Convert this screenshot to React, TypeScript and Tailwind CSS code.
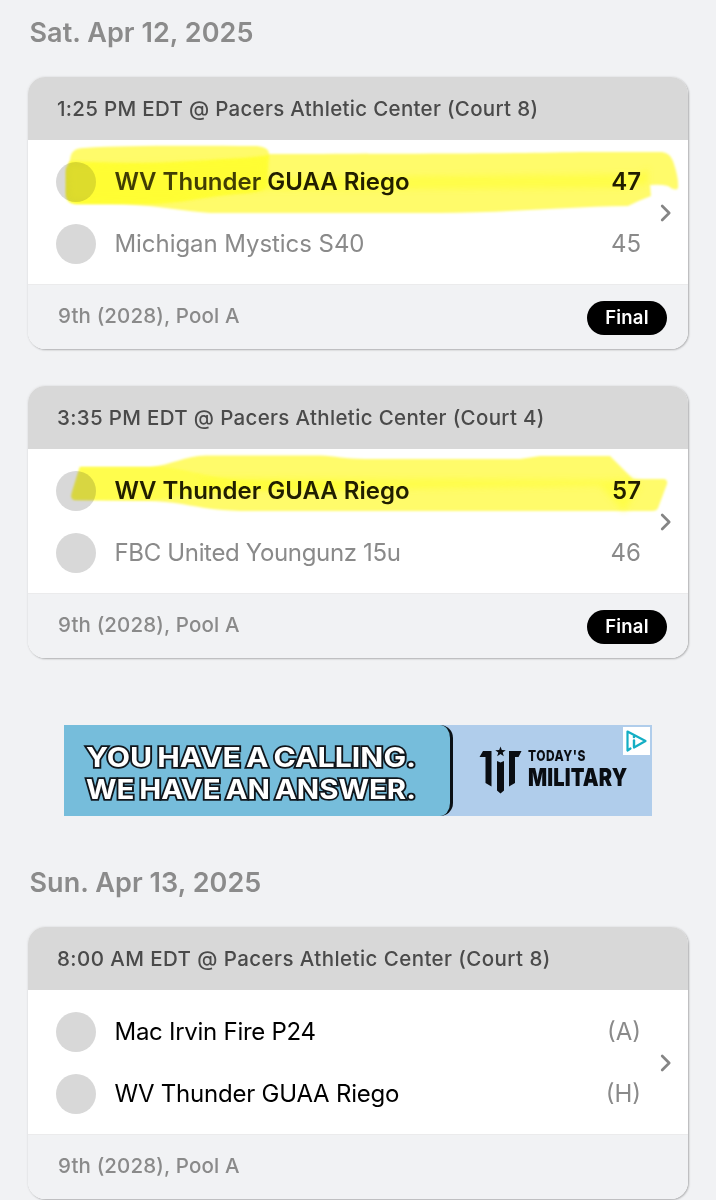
import type { ReactNode } from "react";

type Team = { name: string; score: string; nameClass: string; scoreClass: string };

function TeamRow({ team }: { team: Team }) {
  return (
    <div className="flex h-10 items-center">
      <span className="size-10 shrink-0 rounded-full bg-[#d8d8d8]" />
      <span className={`ml-[19px] grow text-2xl ${team.nameClass}`}>{team.name}</span>
      <span className={`text-2xl ${team.scoreClass}`}>{team.score}</span>
    </div>
  );
}

function Game({
  title,
  titleClass,
  teams,
  final,
  children,
}: {
  title: string;
  titleClass: string;
  teams: Team[];
  final?: boolean;
  children?: ReactNode;
}) {
  return (
    <section className="relative mx-7 h-[272px] w-[660px] rounded-[17px] bg-white shadow-[1px_1px_2px_rgba(0,0,0,0.25),0_0_3px_rgba(0,0,0,0.08)]">
      <header className="flex h-[63px] items-center rounded-t-[17px] bg-[#d8d8d8] pt-0.5 pl-[29px]">
        <h3 className={`text-[20.5px] font-[480] text-[#4a4a4a] ${titleClass}`}>{title}</h3>
      </header>
      <div className="flex h-36 items-center pt-px pl-[27.5px]">
        <div className="flex w-[585.5px] flex-col gap-[22px]">
          {teams.map((t) => (
            <TeamRow key={t.name} team={t} />
          ))}
        </div>
        <svg viewBox="0 0 12 18" className="ml-[18.5px] h-[18px] w-3" fill="none" stroke="#858585" strokeWidth="2.7" strokeLinecap="round" strokeLinejoin="round">
          <path d="M2.2 2l7 7-7 7" />
        </svg>
      </div>
      <footer className="flex h-[65px] items-center justify-between rounded-b-[17px] border-t border-[#ebebec] bg-[#f1f2f4] pt-px pr-[21px] pl-[30px]">
        <span className="pb-[3px] text-[20.5px] font-[450] tracking-[0.15px] text-[#8a8a8a]">9th (2028), Pool A</span>
        {final && (
          <span className="flex h-[34px] w-20 items-center justify-center rounded-full bg-black pt-px text-[18.5px] font-semibold tracking-[0.2px] text-white">
            Final
          </span>
        )}
      </footer>
      {children}
    </section>
  );
}

const winner = "font-semibold text-[#211e00]";
const loser = "text-[#8a8a8a]";

function Banner() {
  return (
    <aside className="mt-[67px] ml-16 flex h-[91px] w-[588px] overflow-hidden bg-[#b0cdeb]">
      <div className="flex h-full w-[389px] flex-col items-start overflow-hidden rounded-r-[13px] border-r-[3.5px] border-[#0b1116] bg-[#76bddb] pt-[16px] pl-[22px] text-[27.5px] leading-[32px] font-bold whitespace-nowrap text-white [-webkit-text-stroke:3.5px_#10161c] [paint-order:stroke_fill]">
        <p className="origin-left scale-x-[1.1] [word-spacing:-2px]">YOU HAVE A CALLING.</p>
        <p className="origin-left scale-x-[1.07] [word-spacing:-2px]">WE HAVE AN ANSWER.</p>
      </div>
      <svg viewBox="479 746 43 50" className="mt-[21px] ml-[26px] h-[50px] w-[43px] shrink-0" fill="#0a0d12">
        <path d="M483 751h8.500v35.500l-6-3.500v-26h-6z" />
        <path d="M497 761l3.500 1.500 3.500-1.500v29.500l-3.500 3-3.500-3z" />
        <path d="M509 751h12.500l-3 6h-3.500v26l-6 3.500z" />
        <path d="M500.500 746.500l1.300 3.600 3.900.1-3 2.400 1.100 3.700-3.300-2.200-3.300 2.200 1.100-3.700-3-2.400 3.900-.1z" />
      </svg>
      <div className="mt-[24px] ml-[6px] flex w-[90px] shrink-0 flex-col items-start gap-[6px] whitespace-nowrap text-[#0a0d12]">
        <p className="h-[13px] origin-left scale-x-[0.8] text-[15px] leading-[13px] font-extrabold tracking-[0.6px]">TODAY'S</p>
        <p className="h-[18px] origin-left scale-x-[0.8] text-[25px] leading-[18px] font-black tracking-[0.2px]">MILITARY</p>
      </div>
      <div className="mt-0.5 mr-[2px] ml-auto flex size-[27.5px] shrink-0 items-center justify-center bg-white">
        <svg viewBox="0 0 24 24" className="size-6" fill="none" stroke="#14aec4" strokeWidth="2.200" strokeLinejoin="round" strokeLinecap="round">
          <path d="M6.500 19.500L3.500 21.500V2.500L21.500 12L10 18.500" />
          <path d="M10 11.500v6" strokeWidth="2.400" />
          <path d="M10 7.800v.2" strokeWidth="2.600" />
        </svg>
      </div>
    </aside>
  );
}

export default function App() {
  return (
    <main className="h-[1200px] w-[716px] overflow-hidden bg-[#f1f2f4] font-['Inter',sans-serif] whitespace-nowrap">
      <h2 className="h-[77px] pt-[13px] pl-[29.5px] text-[27px] leading-10 font-[580] tracking-[0.06px] text-[#8b8b8b]">Sat. Apr 12, 2025</h2>
      <Game
        title="1:25 PM EDT @ Pacers Athletic Center (Court 8)"
        titleClass="tracking-[0.31px]"
        final
        teams={[
          { name: "WV Thunder GUAA Riego", score: "47", nameClass: winner, scoreClass: winner },
          { name: "Michigan Mystics S40", score: "45", nameClass: `${loser} tracking-[-0.06px]`, scoreClass: loser },
        ]}
      >
        <svg viewBox="28 77 660 272" className="pointer-events-none absolute inset-0 size-full mix-blend-multiply">
          <defs>
            <filter id="soft" x="-5%" y="-20%" width="110%" height="140%"><feGaussianBlur stdDeviation="1.1" /></filter>
            <filter id="softer" x="-10%" y="-40%" width="120%" height="180%"><feGaussianBlur stdDeviation="3" /></filter>
          </defs>
          <g filter="url(#soft)" fill="#fffb6b">
            <path d="M70 161Q70 148 84 148C130 145 200 146 257 146Q269 147 269 154C350 154 500 154 580 152L662 152Q670 153 673 161Q679 178 678 188Q676 192 668 186Q660 184 650 185L651 196Q640 200 628 206C560 207 500 213 440 213L210 213C180 211 150 204 110 204L76 204Q66 203 66 194L66 168Z" />
          </g>
          <g filter="url(#soft)" fill="#ffff2a" opacity="0.8">
            <path d="M66 171L70 161C110 163 150 164 190 161C220 159 250 158 269 155L267 186Q265 192 240 194C200 197 180 204 150 204L76 204Q66 203 66 194Z" />
          </g>
          <path d="M250 178L640 174L648 168L648 184L620 188L250 190Z" fill="#ffff30" opacity="0.6" filter="url(#softer)" />
        </svg>
        <svg viewBox="28 77 660 272" className="pointer-events-none absolute inset-0 size-full">
          <path d="M68 166L120 163L266 158L264 192L180 199L70 200Z" fill="#fffa20" opacity="0.14" filter="url(#softer)" />
        </svg>
      </Game>
      <div className="h-[37px]" />
      <Game
        title="3:35 PM EDT @ Pacers Athletic Center (Court 4)"
        titleClass="tracking-[0.34px]"
        final
        teams={[
          { name: "WV Thunder GUAA Riego", score: "57", nameClass: winner, scoreClass: winner },
          { name: "FBC United Youngunz 15u", score: "46", nameClass: `${loser} tracking-[-0.34px]`, scoreClass: loser },
        ]}
      >
        <svg viewBox="28 386 660 272" className="pointer-events-none absolute inset-0 size-full mix-blend-multiply">
          <path filter="url(#soft)" fill="#fffb6b" d="M80 467L150 467C172 465 184 456 206 455.500L320 455.500C335 456 345 459 365 459L520 459L540 456L610 456L633 479L664 479Q668 480 667 484L658 508Q657 511 652 511L240 511C200 510 185 502 150 501L76 500Q70 500 72 493Z" />
          <path filter="url(#soft)" fill="#ffff3a" opacity="0.6" d="M80 467L160 467C185 468 200 476 240 480L350 482L350 490L240 490C200 492 170 500 140 500L76 500Q70 500 72 493Z" />
          <path filter="url(#softer)" fill="#ffff30" opacity="0.6" d="M200 478L600 480L633 479L640 486L624 512L600 486L200 492Z" />
        </svg>
      </Game>
      <Banner />
      <h2 className="mt-[47px] h-[64px] pl-[29.5px] text-[27px] leading-10 font-[580] tracking-[0.06px] text-[#8b8b8b]">Sun. Apr 13, 2025</h2>
      <Game
        title="8:00 AM EDT @ Pacers Athletic Center (Court 8)"
        titleClass="tracking-[0.43px]"
        teams={[
          { name: "Mac Irvin Fire P24", score: "(A)", nameClass: "text-black tracking-[-0.27px]", scoreClass: loser },
          { name: "WV Thunder GUAA Riego", score: "(H)", nameClass: "text-black tracking-[-0.22px]", scoreClass: loser },
        ]}
      />
    </main>
  );
}
